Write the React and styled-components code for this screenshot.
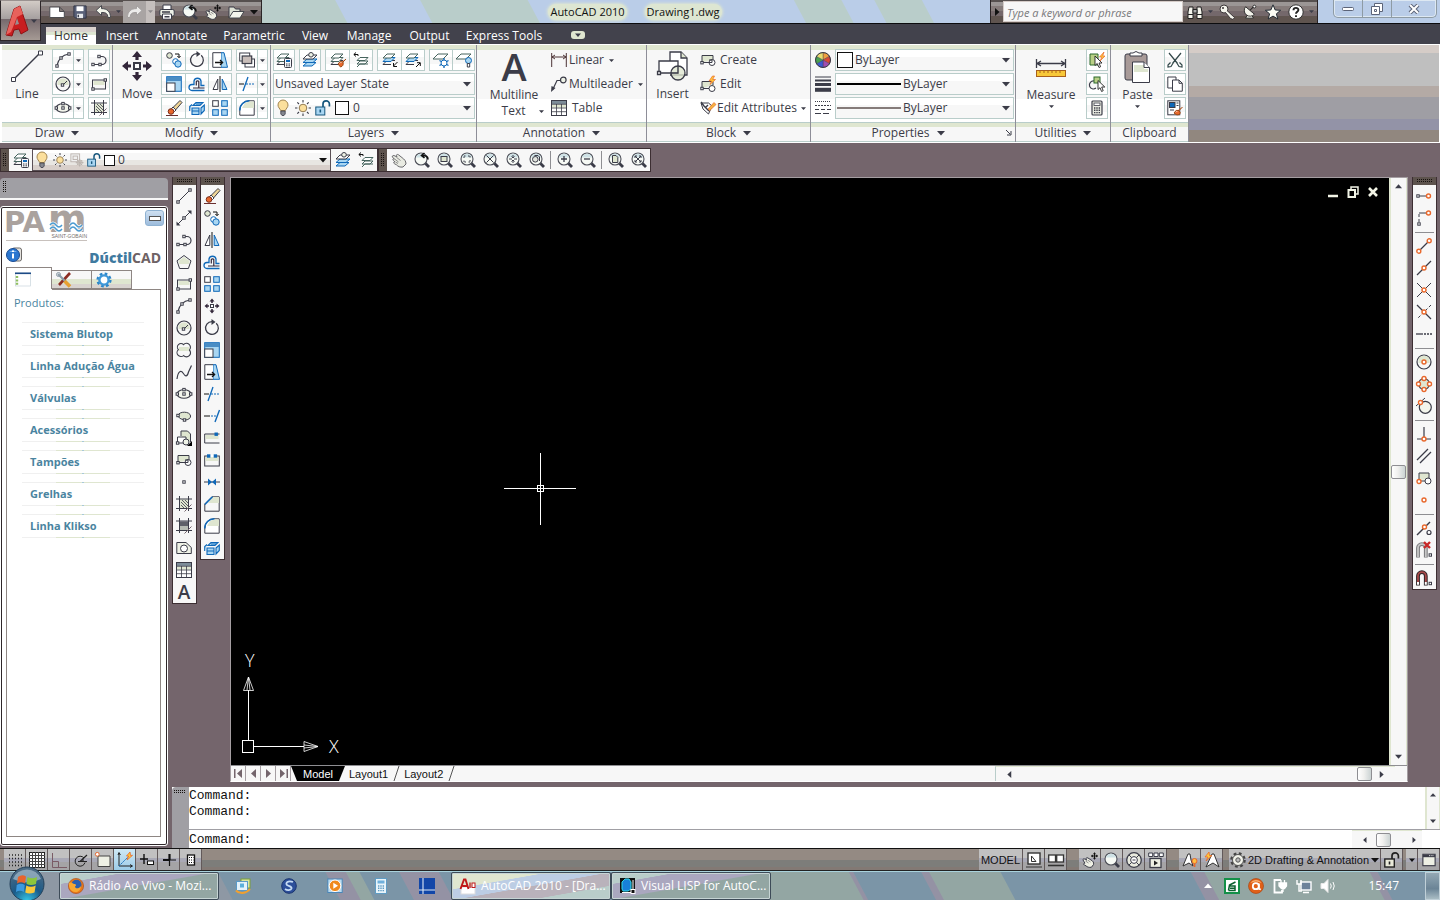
import styled, { createGlobalStyle, css } from 'styled-components';

const ink = '#3b3c48';
const blue = '#0f68b8';
const sky = '#a9d6f2';
const mint = '#dfe6d0';
const orange = '#e8682c';
const ui = '"Open Sans", "Noto Sans", sans-serif';

const GlobalStyle = createGlobalStyle`
	*, *::before, *::after { box-sizing: border-box; }
	html, body, #root { height: 100%; }
	body {
		margin: 0;
		background: #74656c;
		color: ${ink};
		font: 11px/16px ${ui};
		overflow: hidden;
	}
	button, select, input {
		font: inherit;
		color: inherit;
		margin: 0;
		padding: 0;
		border: 0;
		background: none;
	}
	svg { display: block; flex: none; }
	ul { list-style: none; margin: 0; padding: 0; }
`;

/* ---------- drawings, on a 16 unit grid ---------- */

const Sq = ({ x, y, s = 2.4 }) => <rect x={x - s / 2} y={y - s / 2} width={s} height={s} fill="#fff" />;
const Snap = ({ x, y }) => <circle cx={x} cy={y} r="2" stroke={orange} strokeWidth="1.4" fill="#fff" />;
const Lens = ({ children }) => (
	<>
		<path d="M11 11 L15 15" strokeWidth="2.8" />
		<circle cx="7" cy="7" r="6" fill="#f7faf5" stroke="#4d4f58" strokeWidth="1.1" />
		<path d="M2 5.5 A5.2 5.2 0 0 1 12 5.5Z" fill="#cfe2e6" stroke="none" />
		{children}
	</>
);
const Sheets = ({ top = '#fff' }) => (
	<>
		<path d="M1 12.5 L5 8.5 H13" />
		<path d="M1 12.5 H9" />
		<path d="M1 9.5 L5 5.5 H13 L9 9.5Z" fill={top} stroke={top === '#fff' ? '#46645e' : blue} />
		<path d="M1 6 L5 2 H13 L9 6Z" fill="#fff" stroke="#46645e" />
	</>
);
const HatchBase = () => <path d="M3.5 0 V15 M12.5 0 V15 M0 3 H16 M0 12.5 H16" />;

const glyphs = {
	line: <><path d="M2.5 13.5 L13.5 2.5" /><Sq x={2} y={14} /><Sq x={14} y={2} /></>,
	xline: <><path d="M2 14 L14 2" /><path d="M0.5 15.5 V11.5 L4.5 15.5Z M15.5 .5 V4.5 L11.5 .5Z" fill={ink} stroke="none" /><Sq x={8} y={8} /></>,
	polyline: <><path d="M1.5 12.5 H9 M9 12.5 H11 A3.7 3.7 0 0 0 11 4.5 H8" strokeWidth="1.2" /><Sq x={2} y={12.5} /><Sq x={9} y={12.5} /><Sq x={8} y={4.5} /></>,
	polygon: <><path d="M8 1.5 L15 6.8 L12.4 14.5 H3.6 L1 6.8Z" fill="#f7f7f7" /><path d="M8 3 L13.5 7 L13 10 H3 L2.5 7Z" fill={mint} stroke="none" /></>,
	rect: <><rect x="1.5" y="4" width="13" height="9" fill="#f7f7f7" /><rect x="2.5" y="5" width="11" height="4" fill={mint} stroke="none" /><Sq x={2} y={13} /><Sq x={14.3} y={4} /></>,
	arc: <><path d="M1.8 14 C3 8 7 3 14 2" strokeWidth="1.2" /><Sq x={2} y={14} /><Sq x={6} y={6} /><Sq x={14} y={2} /></>,
	circle: <><circle cx="8" cy="8" r="7" fill="#f7f7f7" strokeWidth="1.2" /><path d="M2.5 6 A6 6 0 0 1 13.5 6 V9 H2.5Z" fill={mint} stroke="none" /><path d="M8 9 L12 5" /><Sq x={7.5} y={9} /></>,
	cloud: <><path d="M7.5 2.6 A3.4 3.4 0 1 0 2.4 7.6 A3.6 3.6 0 1 0 7.6 13.6 A3.7 3.7 0 1 0 13.4 8 A3.5 3.5 0 1 0 7.5 2.6Z" fill="#f7f7f7" strokeWidth="1.1" /><path d="M3 5 H13 V9 H3Z" fill={mint} stroke="none" /></>,
	spline: <path d="M1 15 C2 7 5 6 7 9 S11 14 12.5 8 L15.5 1.5" strokeWidth="1.2" />,
	ellipse: <><ellipse cx="8" cy="8" rx="7" ry="4.3" fill="#f3f5ec" strokeWidth="1.1" /><Sq x={1.3} y={8} /><Sq x={8} y={3.6} /><Sq x={8} y={8} /><Sq x={14.7} y={8} /></>,
	ellArc: <><path d="M2 7.5 C3 3 14 3 14.6 8 C14.6 10.5 12 12 9 12 M2 7.5 C2 9 4 11 7 11.5" fill={mint} /><Sq x={2} y={7.5} /><Sq x={8.5} y={12} /></>,
	block: <><path d="M5 6 V1 H11.5 L14.5 4 V12" fill={mint} /><path d="M1.5 13 V7 H10 V13Z" fill="#fff" /><circle cx="10" cy="12" r="3" fill="#eef2e6" /><Sq x={1.6} y={13} /><path d="M16 11 V16 H11Z" fill="#000" stroke="none" /></>,
	makeBlock: <><path d="M2 10.5 V3.5 H13 V8 M2 10.5 H9" fill={mint} /><circle cx="12" cy="10.5" r="3" fill="#fff" /><path d="M9 8 H12 V10.5 H9" /><Sq x={2} y={10.7} /></>,
	editBlock: <><path d="M2 12.5 V5.5 H13 V9 M2 12.5 H9" fill={mint} /><circle cx="12" cy="12.5" r="3" fill="#fff" /><Sq x={2} y={12.5} /><path d="M12.5 0 L9 5 H11.5 L10 8.5 L15.5 3.5 H12.7 L14.5 0Z" fill="#ffc83a" stroke={orange} strokeWidth=".7" /></>,
	editAttr: <><path d="M1 3 L8.5 3 L12 6 L8.5 14 L3 9Z" fill="#fff" /><path d="M1 2 L4 6 L9 11 M5 8 L8 5" strokeWidth="1.4" /><path d="M8 9 L14 2.5 L16 4.5 L9.8 10.5Z" fill="#f5b440" stroke={orange} strokeWidth=".7" /></>,
	point: <Sq x={8} y={8} />,
	hatch: <><rect x="4" y="3.5" width="8" height="9" fill={mint} stroke="none" /><path d="M5 9 L8 12 M5 6 L11 12 M6 4 L12 10 M9 4 L12 7" strokeWidth=".8" /><HatchBase /><path d="M8.5 15.5 L15.5 8.5" stroke="#74656c" /></>,
	gradient: <><rect x="4" y="3.5" width="8" height="5" fill="#5e6068" stroke="none" /><rect x="4" y="8" width="8" height="5" fill="#b6bbb2" stroke="none" /><HatchBase /><path d="M8.5 15.5 L15.5 8.5" stroke="#74656c" /></>,
	region: <><path d="M.8 13.5 V2.5 H10 L15.3 7.5 V13.5Z" fill="#eff2e6" /><circle cx="8" cy="8.5" r="3.5" fill="#fff" /></>,
	table: <><rect x=".5" y=".5" width="15" height="15" fill="#fff" /><rect x="1" y="1" width="14" height="3" fill="#7d8c98" stroke="none" /><rect x="1" y="4.5" width="14" height="3" fill={mint} stroke="none" /><path d="M.5 4.3 H15.5 M.5 8 H15.5 M.5 11.7 H15.5 M5.5 4 V15 M10.5 4 V15" strokeWidth=".8" /></>,
	erase: <><path d="M0 15.5 H12" stroke="#6b3030" /><path d="M7 7.5 L14 .5 L16 2.5 L9.5 10Z" fill="#efd495" /><path d="M5.5 8.5 L7 7 L10 10 L8.5 11.5Z" fill="#fff" /><circle cx="5" cy="11.5" r="2.8" fill={orange} stroke="#7a2c18" /></>,
	copy: <><circle cx="3.5" cy="3.5" r="2.8" fill={mint} /><circle cx="9.5" cy="9.5" r="2.8" fill="#fff" stroke={blue} /><circle cx="12" cy="12" r="3.2" fill={sky} stroke={blue} /><path d="M9 2 H13 V5 M11.4 4 L13 5.8 L14.6 4" stroke="#111" /></>,
	mirror: <><path d="M1 13.5 L5.8 3 V13.5Z" fill="#fff" /><path d="M15 13.5 L10.2 3 V13.5Z" fill={sky} stroke={blue} /><path d="M8 0 V16" stroke="#111" /></>,
	offset: <><path d="M15.5 14.5 H3 A2.4 2.4 0 0 1 3 8.5 H5 V5 A3.6 3.6 0 0 1 12 5 V9.5 H15.5" fill="#f7fafc" stroke={blue} strokeWidth="1.3" /><path d="M15.5 12 H4 M7.3 9.5 V5.5 A1.5 1.5 0 0 1 9.8 5.5 V12" stroke="#33273a" strokeWidth="1.2" /></>,
	array: <><rect x=".7" y=".7" width="5.6" height="5.6" fill="#fff" /><g fill={sky} stroke={blue}><rect x="9.7" y=".7" width="5.6" height="5.6" /><rect x=".7" y="9.7" width="5.6" height="5.6" /><rect x="9.7" y="9.7" width="5.6" height="5.6" /></g></>,
	move: <><path d="M8 .5 L10.5 3.5 H5.5Z M8 15.5 L10.5 12.5 H5.5Z M.5 8 L3.5 5.5 V10.5Z M15.5 8 L12.5 5.5 V10.5Z" fill="#33273a" stroke="none" /><path d="M8 3 V5 M8 11 V13 M3 8 H5 M11 8 H13" stroke="#33273a" strokeWidth="1.6" /><Sq x={8} y={8} s={3} /></>,
	rotate: <><path d="M8 1.6 A6.4 6.4 0 1 0 12.2 3.2" strokeWidth="1.3" /><path d="M7.5 -1 V5 L11.5 2Z" fill={ink} stroke="none" /></>,
	scale: <><rect x=".7" y=".7" width="14.6" height="14.6" fill={sky} stroke={blue} /><rect x="1" y="1" width="14" height="4" fill="#4a8dc4" stroke="none" /><rect x=".7" y="7" width="8.3" height="8.3" fill="#fff" /></>,
	stretch: <><path d="M9 .7 H12 L15.5 15.3 H9Z" fill={sky} stroke={blue} /><path d="M9 .7 H.8 V15.3 H9" fill="#fff" /><path d="M3 10.5 H10 M8 8 L10.6 10.5 L8 13" stroke="#111" strokeWidth="1.3" /></>,
	trim: <><path d="M0 8 H5" stroke="#111" /><path d="M7 8 H16" stroke={blue} strokeDasharray="2 1" /><path d="M4 15 L9 1" stroke={blue} strokeWidth="1.3" /></>,
	extend: <><path d="M0 8 H6" stroke="#111" /><path d="M7 8 H12" stroke={blue} strokeDasharray="2 1" /><path d="M11 14 L15.5 2" stroke={blue} strokeWidth="1.4" /></>,
	breakPt: <><path d="M.7 13 V4 H15.5" /><rect x="1.5" y="5" width="13" height="4" fill={mint} stroke="none" /><path d="M.7 13 H15.5" /><rect x="10.5" y="2.5" width="3.4" height="3.4" fill={blue} stroke="none" /></>,
	breakObj: <><rect x=".7" y="4" width="14.6" height="10" fill="#f7f7f7" /><rect x="1.5" y="5" width="13" height="4" fill={mint} stroke="none" /><path d="M5 4 H11" stroke="#fff" strokeWidth="2" /><rect x="3" y="2.3" width="3.4" height="3.4" fill={blue} stroke="none" /><rect x="9.7" y="2.3" width="3.4" height="3.4" fill={blue} stroke="none" /></>,
	join: <><path d="M0 8 H16" /><path d="M4 4.5 L8 8 L4 11.5Z M12 4.5 L8 8 L12 11.5Z" fill={blue} stroke="none" /></>,
	chamfer: <><path d="M.8 15.2 V8 L8 .8 H15.2 V15.2Z" fill="#f7f7f7" /><path d="M8 1 L15 1 V7 H4Z" fill={mint} stroke="none" /><path d="M.8 8.5 L8.5 .8" stroke={blue} strokeWidth="1.6" /></>,
	fillet: <><path d="M.8 15.2 V10 A9 9 0 0 1 10 .8 H15.2 V15.2Z" fill="#fff" /><path d="M6 3 L10 1.5 H15 V8 H3Z" fill={mint} stroke="none" /><path d="M.8 10.5 A9.4 9.4 0 0 1 10.5 .8" stroke={blue} strokeWidth="1.5" /></>,
	explode: <><path d="M3 8 H10 V14.5 H3Z M4 5.5 L7 2.5 H14 L11 5.5Z M12 8 L15.3 5 V10.5 L12 14Z M.7 11 V6.5 L3 4.5" fill={sky} stroke={blue} strokeWidth="1.1" /><path d="M3 11 H10 M7 4 H12" stroke={blue} /></>,
	order: <><rect x=".7" y="1" width="10" height="8" fill="#fff" /><rect x="6" y="7" width="9.5" height="8" fill="#fff" /><rect x="3.2" y="4" width="9.5" height="7.5" fill="#c8bdb9" strokeWidth="1.2" /></>,
	layerProps: <><Sheets /><rect x="8.5" y="6.5" width="7" height="9" rx="1" fill="#f5f7fa" /><rect x="10" y="8" width="4" height="2" fill={blue} stroke="none" /><path d="M10 12 H14 M10 13.8 H14" strokeDasharray="1 .5" /></>,
	layerCur: <><path d="M1 14 L5 10.5 H14 L10 14Z" fill={sky} stroke={blue} /><path d="M1 10.5 L5 7 H15 L11 10.5Z" fill={sky} stroke={blue} /><path d="M1 7 L5 3 H15 L11 7Z" fill="#fff" /><circle cx="9" cy="2.8" r="2.3" fill="#eef2e6" /></>,
	layerMatch: <><Sheets /><path d="M8 12 Q10 8 13 10 L16 7 M8 12 L10.5 15 Q14 14 13 10" fill={orange} stroke="#9c4a16" /></>,
	layerPrev: <><path d="M4 15 L7 12 H15 M4 12 L7 9 H15 L12 12Z M4 8.5 L7 5.5 H15 L12 8.5Z" fill="#fff" stroke="#46645e" /><path d="M1 2.5 H5 V4 M3 .5 L.8 2.5 L3 4.5" stroke="#111" /></>,
	layerIso: <><Sheets top={sky} /><path d="M15.5 10 L11.5 14 M11.5 11 V14.5 H15" stroke="#111" /></>,
	layerUniso: <><Sheets top={sky} /><path d="M11 15 L15 11 M12 10.7 H15.3 V14" stroke="#111" /></>,
	layerFreeze: <><path d="M0 7 L5 2 H15 L10 7Z" fill="#fff" stroke="#46645e" /><path d="M11 6 V16 M6.5 8.5 L15.5 13.5 M15.5 8.5 L6.5 13.5" stroke={blue} strokeWidth="1.3" /><circle cx="11" cy="11" r="3" stroke={blue} fill="#fff" /></>,
	layerOff: <><path d="M0 7 L5 2 H15 L10 7Z" fill="#fff" stroke="#46645e" /><circle cx="12.5" cy="8.5" r="3" fill={sky} stroke={blue} /><path d="M11.3 11.5 H13.7 V15 H11.3Z" fill="#fff" /></>,
	bulb: <><path d="M5.6 10.5 C5 8.5 3 7.5 3 5 A5 5 0 0 1 13 5 C13 7.5 11 8.5 10.4 10.5Z" fill="#fbdf9c" stroke="#a28550" /><path d="M5.8 11 H10.2 V14 L9 15.5 H7 L5.8 14Z" fill="#85878f" stroke={ink} strokeWidth=".8" /></>,
	sun: <><circle cx="8" cy="8" r="3.8" fill="#fbdf9c" stroke="#927a50" /><path d="M8 0 V2.4 M8 13.6 V16 M0 8 H2.4 M13.6 8 H16 M2.3 2.3 L4 4 M12 12 L13.7 13.7 M13.7 2.3 L12 4 M4 12 L2.3 13.7" strokeWidth="1.1" /></>,
	vpFreeze: <g stroke="#b9b1ac"><rect x="1" y="1" width="10" height="9" fill="#f0f0f0" /><rect x="3.5" y="3.5" width="5" height="4" /><circle cx="11" cy="11" r="3" fill="#e4e0dc" /><path d="M11 6.5 V15.5 M6.5 11 H15.5 M8 8 L14 14 M14 8 L8 14" /></g>,
	unlock: <><rect x=".8" y="7" width="9" height="8" fill={sky} stroke="#16567c" /><path d="M8 7 V4 A3.2 3.2 0 0 1 14.4 4 V6.5" stroke="#16567c" strokeWidth="1.7" /><path d="M5.3 9.5 V12.5" stroke="#16567c" strokeWidth="1.6" /></>,
	lock: <><rect x=".8" y="7" width="9.5" height="8" fill="#e9ead9" stroke="#222" strokeWidth="1.4" /><path d="M8 7 V4 A3.2 3.2 0 0 1 14.4 4 V6.5" stroke="#222" strokeWidth="1.7" /><path d="M5.5 9.5 V12.5" stroke="#222" strokeWidth="1.6" /></>,
	linear: <><path d="M.7 1 V15 M15.3 1 V15 M1 5 H15 M4 3 L1 5 L4 7 M12 3 L15 5 L12 7" stroke="#4c3335" /></>,
	mleader: <><path d="M1.5 14 L6 4.5 H9.5" strokeWidth="1.2" /><path d="M0 16 L.5 10 L4.5 12Z" fill={ink} stroke="none" /><circle cx="12.3" cy="4" r="2.8" fill="#eef2e6" strokeWidth="1.2" /></>,
	pan: <><path d="M1.2 5 C1 3.6 2.6 3 4 4 L6 5 C4.6 3 6 1.8 7.5 2.8 L11 5.6 C13.5 7.5 15 9 15 12 L12 15 C9 15.5 7 14.5 5.5 12.8 L3.6 11.8 C2 11 2.6 9.8 4 9.9 L2.5 8.6 C1.2 7.4 2 6.3 3.5 7Z" fill="#e9ebe2" stroke="#6a6a6e" /><path d="M4 7.3 L7.5 10 M5.5 5.3 L9.5 8.5 M4.5 10 L7 11.5" stroke="#8c8c8c" /></>,
	panMove: <><path d="M1 8 C.8 6.8 2 6.5 3.5 7.5 L5 8.2 C3 6.5 4.5 5 6 6 L9 8 C11 9 12 10.5 11.5 12.5 L9.5 15.2 C7 15.7 5 15 4 13.8 L2.3 13 C1 12 1.8 11 3 11.2Z" fill="#f0f1e6" stroke={ink} /><path d="M3.5 9 L6.5 11 M6 8.3 L8.5 10" stroke="#8c8c8c" /><path d="M12.5 .5 V7.5 M9 4 H16 M11.3 1.8 H13.7 M11.3 6.2 H13.7 M10.3 2.8 V5.2 M14.7 2.8 V5.2" stroke="#111" /></>,
	zoomPrev: <Lens><path d="M14 7.5 C14 4 12 3.5 8 3.5 M10.5 1 L7.5 3.5 L10.5 6" stroke="#111" strokeWidth="1.6" fill="none" /></Lens>,
	zoomWin: <Lens><rect x="4" y="4.5" width="6" height="5" fill={mint} /></Lens>,
	zoomDyn: <Lens><path d="M4 6 V4 H6 M8 4 H10 V6 M10 8 V10 H8 M6 10 H4 V8" strokeDasharray="1.5 .5" /></Lens>,
	zoomScale: <Lens><path d="M3.5 3.5 L10.5 10.5 M10.5 3.5 L3.5 10.5" /></Lens>,
	zoomCenter: <Lens><path d="M7 3 V6 M7 8 V11 M3 7 H6 M8 7 H11 M5.5 4.5 L7 6 L8.5 4.5 M5.5 9.5 L7 8 L8.5 9.5" /></Lens>,
	zoomObj: <Lens><circle cx="6.3" cy="7.3" r="2.8" fill="#e3e6df" /><path d="M5.5 3.5 H9 L10.5 5 V9" /></Lens>,
	zoomIn: <Lens><path d="M7 4 V10 M4 7 H10" strokeWidth="1.3" /></Lens>,
	zoomOut: <Lens><path d="M4 7 H10" strokeWidth="1.3" /></Lens>,
	zoomAll: <Lens><path d="M4.5 3.5 H8 L9.8 5.3 V10.5 H4.5Z" fill={mint} /></Lens>,
	zoomExt: <Lens><path d="M4 4 L10 10 M10 4 L4 10 M4 6 V4 H6 M8 4 H10 V6 M10 8 V10 H8 M6 10 H4 V8" /></Lens>,
	zoomPlain: <Lens />,
	newDoc: <path d="M.8 13.5 V3 H10.5 L15.3 7.5 V13.5Z M10.5 3 V7.5 H15.3" fill="#fff" stroke="#4c4c50" />,
	save: <><path d="M1 1 H15 V15 H3 L1 13Z" fill="#596078" stroke="#2d3040" /><rect x="4" y="1.5" width="8" height="5.5" fill="#fff" stroke="none" /><rect x="4.5" y="10" width="7" height="5" fill="#e7e9ec" stroke="none" /><path d="M6 11 V14" stroke="#2d3040" strokeWidth="1.5" /></>,
	undo: <path d="M6.5 1.5 L1 6.5 L6.5 11.5 V8.5 C11 8.3 12.5 9.5 13 13.5 H15.5 C15.5 7.5 12 4.5 6.5 4.6Z" fill="#f2f4ea" stroke="#46484e" />,
	redo: <path d="M9.5 1.5 L15 6.5 L9.5 11.5 V8.5 C5 8.3 3.5 9.5 3 13.5 H.5 C.5 7.5 4 4.5 9.5 4.6Z" fill="#ecebea" stroke="#a39f9f" />,
	print: <><path d="M4 6 V1 H12 V6" fill="#fff" /><rect x=".8" y="5.5" width="14.4" height="6.5" rx="1.5" fill="#ecefe6" /><path d="M3.5 10 H12.5 V15.2 H3.5Z" fill="#fff" /><path d="M3 8 H11 M5.5 12.7 H10.5" strokeWidth="1.4" /></>,
	open: <><path d="M1 14 V3 H6 L7.5 5 H12 V7.5" fill="#dfe3d6" /><path d="M1 14 L5 7.5 H16 L12 14Z" fill="#f4f5ec" stroke="#46484e" /></>,
	binoc: <><path d="M2 3 H6 V14.5 H1 V8Z M10 3 H14 L15 8 V14.5 H10Z" fill="#f4f4ec" stroke="#222" /><path d="M6 5.5 H10 V9 H6Z" fill="#aaa" stroke="#222" /><path d="M1 10.5 H6 M10 10.5 H15" stroke="#222" /></>,
	key: <><circle cx="5" cy="5" r="4" fill="#f4f4ec" stroke="#3b3638" /><path d="M8 6.5 L15.5 13.5 L14 15.5 L11.5 14.5 L6.3 8.3" fill="#f4f4ec" stroke="#3b3638" /><circle cx="4" cy="4" r="1" fill="#3b3638" stroke="none" /></>,
	dish: <><path d="M6 10 L3 15 H12 L9.5 11" fill="#f4f4ec" stroke="#222" /><path d="M3 2 A6.5 6.5 0 0 0 13 10.5Z" fill="#f4f4ec" stroke="#222" /><path d="M8 6 L12.5 1.5" stroke="#222" strokeWidth="1.2" /><circle cx="13" cy="1.8" r="1.6" fill="#fff" stroke="#222" /></>,
	star: <path d="M8 .8 L10.2 6 L15.6 6.3 L11.4 9.8 L12.8 15 L8 12.1 L3.2 15 L4.6 9.8 L.4 6.3 L5.8 6Z" fill="#fcfcf4" stroke="#222a33" />,
	help: <><circle cx="8" cy="8" r="7.2" fill="#fff" stroke="#333" /><path d="M5.5 6.2 C5.5 3 10.6 3.2 10.4 6 C10.3 7.7 8 7.9 8 9.8 M8 11.3 V13" stroke="#222" strokeWidth="1.9" /></>,
	selCycle: <><path d="M1 2 H9 V13 H1Z" fill="#b9cf85" stroke="#2d6a2d" /><path d="M15 0 L10.5 5 H13 L11 9 L16 4 H13.7Z" fill="#ffc83a" stroke={orange} strokeWidth=".7" /><path d="M6 4 V13.5 L8.2 11.5 L10 15.5 L11.6 14.7 L10 11 H13Z" fill="#fff" stroke="#222" strokeWidth=".9" /></>,
	selSimilar: <><path d="M5 5 A4 4 0 1 0 7 12" strokeWidth="1.2" /><rect x="5" y="1" width="6" height="6" fill="#b9cf85" stroke="#2d6a2d" /><path d="M9 4.5 V13.5 L11 11.7 L12.6 15.5 L14.2 14.7 L12.7 11 H15.8Z" fill="#fff" stroke="#222" strokeWidth=".9" /></>,
	calc: <><rect x="3" y="1" width="10" height="14" rx="1" fill="#e9ebe2" strokeWidth="1.2" /><rect x="5" y="3" width="6" height="2.5" fill="#fff" strokeWidth=".8" /><path d="M5 8 H11 M5 10.3 H11 M5 12.6 H11" strokeWidth="1.4" strokeDasharray="1.4 .9" /></>,
	cut: <path d="M2 1 L10.5 11.5 M14 1 L5.5 11.5 M3.5 10.5 L1 13 V15 L4 14.5 L8 8 M12.5 10.5 L15 13 V15 L12 14.5 L8 8" stroke="#33484a" strokeWidth="1.2" />,
	copyClip: <><path d="M.8 12 V1 H9 V12Z" fill="#fff" /><path d="M5.5 15.2 V4 H12 L15.3 7.3 V15.2Z M12 4 V7.3 H15.3" fill="#fff" /></>,
	matchProp: <><rect x=".8" y=".8" width="12" height="14" fill="#fff" /><rect x="2.5" y="2.5" width="5.5" height="5" fill={blue} stroke={ink} /><path d="M9.5 3 H11.5 M9.5 5.5 H11.5 M3 10 H7" /><path d="M7 13 Q9 9 12 10.5 L15.5 7 M7 13 Q10 16 12.5 14.5 Q14 12.5 12 10.5" fill={orange} stroke="#9c4a16" /></>,
	wheelCol: <g strokeWidth=".4"><path d="M8 8 V.5 A7.5 7.5 0 0 1 14.5 4.2Z" fill="#f0a040" /><path d="M8 8 L14.5 4.2 A7.5 7.5 0 0 1 14.5 11.8Z" fill="#d84838" /><path d="M8 8 L14.5 11.8 A7.5 7.5 0 0 1 8 15.5Z" fill="#a04cb0" /><path d="M8 8 V15.5 A7.5 7.5 0 0 1 1.5 11.8Z" fill="#3e58d0" /><path d="M8 8 L1.5 11.8 A7.5 7.5 0 0 1 1.5 4.2Z" fill="#48a050" /><path d="M8 8 L1.5 4.2 A7.5 7.5 0 0 1 8 .5Z" fill="#e8dc70" /><circle cx="8" cy="8" r="7.5" strokeWidth="1" /></g>,
	weights: <><path d="M0 1 H16" /><path d="M0 4.5 H16" strokeWidth="2" /><path d="M0 8.5 H16" strokeWidth="3" /><path d="M0 13.8 H16" strokeWidth="4" /></>,
	ltypes: <><path d="M0 1.5 H16" strokeDasharray="1 1" /><path d="M0 5.5 H16" strokeDasharray="2 1" /><path d="M0 9.5 H16" strokeDasharray="4 2" /><path d="M0 13.5 H16" strokeDasharray="6 2" /></>,
	snapTrack: <><path d="M2 8 H11" /><Sq x={2} y={8} /><Snap x={12.5} y={8} /></>,
	snapFrom: <><path d="M3 3 H11" /><path d="M3 4 V13" strokeDasharray="3 2" /><Sq x={3} y={14} /><Snap x={12.5} y={3} /></>,
	snapEnd: <><path d="M3 13 L13 3" strokeWidth="1.3" /><Snap x={2.8} y={13.2} /><Snap x={13.2} y={2.8} /></>,
	snapMid: <><path d="M1 15 L15 1" strokeWidth="1.3" /><Snap x={8} y={8} /></>,
	snapInt: <><path d="M1 1 L15 15 M15 1 L1 15" /><Snap x={8} y={8} /></>,
	snapApp: <><path d="M1 1 L15 15" strokeWidth="1.2" /><path d="M15 1 L1 15" strokeDasharray="3 2" /><Snap x={8} y={8} /></>,
	snapExt: <><path d="M0 8 H7" strokeWidth="1.3" /><path d="M8 8 H16" strokeWidth="1.3" strokeDasharray="2 1" /></>,
	snapCen: <><circle cx="8" cy="8" r="7" fill="#f7f7f7" strokeWidth="1.2" /><path d="M2.5 5 A6.3 6.3 0 0 1 13.5 5 V9 H2.5Z" fill={mint} stroke="none" /><Snap x={8} y={8} /></>,
	snapQua: <><circle cx="8" cy="8" r="5.4" fill={mint} strokeWidth="1.2" /><Snap x={8} y={2.5} /><Snap x={2.5} y={8} /><Snap x={13.5} y={8} /><Snap x={8} y={13.5} /></>,
	snapTan: <><circle cx="9.3" cy="9.3" r="6" fill="#f3f5ec" strokeWidth="1.2" /><path d="M0 8 L9 0" /><Snap x={4.5} y={4.5} /></>,
	snapPer: <><path d="M8 1 V13 M1 13 H15" strokeWidth="1.2" /><Snap x={8} y={13} /></>,
	snapPar: <path d="M1 12 L12 1 M4 15 L15 4" strokeWidth="1.3" />,
	snapIns: <><path d="M3 10 V3 H13 V9 M5 11 H9" fill={mint} /><circle cx="12" cy="11" r="3" fill="#fff" /><Snap x={3} y={11.5} /></>,
	snapNode: <Snap x={8} y={8} />,
	snapNear: <><path d="M1 15 L14 2" strokeWidth="1.4" /><Snap x={8.5} y={7} /><circle cx="13" cy="12.5" r="2" fill="#fff" strokeWidth="1.2" /></>,
	snapNone: <><path d="M2 15.5 V6 A3.9 3.9 0 0 1 9.8 6 V15.5" stroke="#77777a" strokeWidth="3.8" /><path d="M2 15 V6 A3.9 3.9 0 0 1 9.8 6 V15" stroke="#c8c8c8" strokeWidth="1.8" /><path d="M8 0 L14 6 M14 0 L8 6" stroke="#c82828" strokeWidth="2.4" /><Sq x={14.3} y={13} /></>,
	snapSet: <><path d="M2 15.5 V6 A3.9 3.9 0 0 1 9.8 6 V15.5" stroke="#2c2426" strokeWidth="3.8" /><path d="M2 12 V6 A3.9 3.9 0 0 1 9.8 6 V12" stroke="#a84848" strokeWidth="1.8" /><path d="M2 12 V14.8 M9.8 12 V14.8" stroke="#fff" strokeWidth="2" /><Sq x={14.3} y={13.5} /></>,
	gridDots: <path d="M2 3 H15 M2 6.5 H15 M2 10 H15 M2 13.5 H15" stroke="#222" strokeDasharray="1 2" strokeWidth="1.3" />,
	grid: <><rect x=".5" y=".5" width="15" height="15" fill="#fff" stroke="#222" /><path d="M3.5 0 V16 M6.5 0 V16 M9.5 0 V16 M12.5 0 V16 M0 3.5 H16 M0 6.5 H16 M0 9.5 H16 M0 12.5 H16" stroke="#444" /></>,
	ortho: <path d="M1.5 1 V15.5 H16 M1.5 9.5 H7.5 V15.5" stroke="#7a5c66" />,
	polar: <><path d="M11 6 A5 5 0 1 0 12 10.5" stroke="#222" /><path d="M7 9.5 L14 3 M5 9.5 H14 M10 6 V9.5" stroke="#222" strokeWidth="1.2" /></>,
	osnap: <><path d="M3 4 H15 V14.5 H3Z" fill="#eef0e4" stroke="#444" /><circle cx="2.3" cy="2.3" r="1.9" fill="#fff" stroke={orange} /></>,
	otrack: <><path d="M2 1 V14 H15 M1 3 L2 .5 L3.4 3 M13 12.6 L15.5 14 L13 15.4" stroke="#222" /><path d="M2 14 L12 4" stroke={blue} strokeDasharray="2 1" /><path d="M13 0 L9.5 4 H11.5 L10 8 L15.5 3.4 H13.5Z" fill="#ffc83a" stroke={orange} strokeWidth=".8" /></>,
	ducs: <><path d="M5 2 V12 M1 7 H9" stroke="#111" strokeWidth="1.4" /><rect x="8.5" y="9" width="6" height="3.5" fill="#fff" stroke="#111" /></>,
	dyn: <><path d="M8.5 2 V8 M2 8 H8" stroke="#111" strokeWidth="2.2" /><path d="M8.5 8 V14 M8 8 H15" stroke="#111" strokeWidth="1.2" /></>,
	qp: <><rect x="4.5" y="3" width="7" height="10" fill="#fff" stroke="#111" strokeWidth="1.3" /><path d="M6 5.5 H10.5 M6 8 H10.5 M6 10.5 H10.5" stroke="#111" strokeDasharray="1 1" /></>,
	layoutBtn: <><rect x="2" y="1" width="12" height="11" fill="#fff" stroke="#333" strokeWidth="1.4" /><path d="M5.5 4 V9.5 H10Z" stroke="#333" /><path d="M0 15 H16" stroke="#333" /></>,
	views: <><rect x=".7" y="3" width="6.8" height="7" fill="#fff" stroke="#333" strokeWidth="1.3" /><rect x="8.7" y="3" width="6.8" height="7" fill="#fff" stroke="#333" strokeWidth="1.3" /><path d="M0 13.5 H16" stroke="#333" strokeWidth="1.6" /></>,
	steer: <><circle cx="8" cy="8" r="7.3" fill="#e9ebdf" strokeWidth="1.3" /><circle cx="8" cy="8" r="3.4" fill="#fff" /><path d="M3 3 L5.5 5.5 M13 3 L10.5 5.5 M3 13 L5.5 10.5 M13 13 L10.5 10.5 M6.5 8 H9.5" /></>,
	motion: <><path d="M.7 1 H4.7 V4.5 H.7Z M6 1 H10 V4.5 H6Z M11.3 1 H15.3 V4.5 H11.3Z" fill="#fff" /><rect x="2" y="6.5" width="11" height="9" fill="#eef0e4" strokeWidth="1.3" /><path d="M6 8.5 L10 11 L6 13.5Z" fill="#222" stroke="none" /></>,
	annoVis: <><path d="M1 14 L6 2 H8 L9 8 L11 14 L7 11Z" fill="#fff" stroke="#333" /><circle cx="12.5" cy="9" r="2.5" fill="#ffc040" stroke={orange} /><path d="M12.5 11.5 V15" stroke={orange} strokeWidth="1.8" /></>,
	annoAuto: <><path d="M2 15 L8 2 H10 L15 15 L9 11Z" fill="#fff" stroke="#333" /><path d="M5 0 L1 5 H4 L2 9 L8 3.5 H5.5Z" fill="#ffc83a" stroke={orange} strokeWidth=".8" /></>,
	gear: <><circle cx="8" cy="8" r="6.3" stroke="#444" strokeWidth="3" strokeDasharray="2.6 2.35" /><circle cx="8" cy="8" r="5.5" fill="#f2f3ea" stroke="#555" /><circle cx="8" cy="8" r="2.2" fill="#bbb" stroke="#555" /></>,
	clean: <><rect x="1" y="1.5" width="14" height="13" fill="#eef0e4" strokeWidth="1.3" /><path d="M1 3.5 H15" strokeWidth="2.6" /><path d="M8 3 H14" stroke="#fff" strokeDasharray="1 1" /></>,
	info: <><rect x="6" y="1" width="9.5" height="13" rx="2" fill="#e5e3df" stroke="#6d6a68" /><circle cx="7" cy="8" r="6.5" fill="#2a76d0" stroke="#1a4c94" /><path d="M3 5 A5 4 0 0 1 11 5Z" fill="#7fb6ee" stroke="none" /><path d="M7 3.5 V5 M7 6.5 V11.5" stroke="#fff" strokeWidth="2" /></>,
	list: <><rect x=".5" y="2" width="15" height="13" fill="#fff" stroke="#c8d4dc" strokeWidth=".7" /><path d="M0 2.3 H16" stroke="#1c4a86" strokeWidth="1.6" /><path d="M2 5 V15" stroke="#8fbe60" strokeWidth="2.4" strokeDasharray="2 1.4" /></>,
	tools: <><path d="M14 1 L3 13" stroke="#8c2c22" strokeWidth="2.6" /><path d="M2 2 L14 14" stroke="#8a9aa6" strokeWidth="2.2" /><path d="M8.5 9 L14 14.5" stroke="#e8a030" strokeWidth="3.6" /><circle cx="2.5" cy="2.5" r="2" stroke="#8a9aa6" /></>,
	cog: <><circle cx="8" cy="8" r="6" stroke="#2b86c9" strokeWidth="3.2" strokeDasharray="2.5 2.2" /><circle cx="8" cy="8" r="4.6" fill="#fff" stroke="#3f97d8" strokeWidth="2.4" /></>,
	firefox: <><circle cx="8" cy="8" r="7.6" fill="#e8781c" stroke="#a84812" strokeWidth=".6" /><circle cx="8.5" cy="6.8" r="5" fill="#2c5fae" stroke="none" /><path d="M1 5 C3 4 4 5 6 6 C8 6 9 7 7 8.5 C7 11 11 11 13 8 C13 12 10 14.5 7 14 C3 13.5 .5 10 1 5Z" fill="#f8a832" stroke="none" /></>,
	photos: <><rect x="6" y="1" width="9" height="9" fill="#d8e6a0" stroke="#7ca03a" /><rect x="1.5" y="3.5" width="11" height="9" fill="#e4f2fa" stroke="#5a9ac8" /><rect x="5" y="5.5" width="4" height="4" fill="#5ab0dc" stroke="none" /><path d="M1 12.5 C4 16 11 16 15 11" stroke="#f0a030" strokeWidth="2" /></>,
	swirl: <><circle cx="8" cy="8" r="7.3" fill="#2c4f9a" stroke="#1a3470" /><path d="M12 4 C7 2 4 5 6 7 C8 8.5 11 8 10.5 10.5 C10 12.5 6 12.5 4 11" stroke="#c6dcf4" strokeWidth="1.8" /></>,
	player: <><rect x=".8" y="1" width="14.4" height="13.5" fill="#bcdcf0" stroke="#4a86b8" /><circle cx="8" cy="7.8" r="5.8" fill="#f08a1c" stroke="#fff" /><path d="M6.3 4.8 L11 7.8 L6.3 10.8Z" fill="#fff" stroke="none" /></>,
	calcBlue: <><rect x="2.5" y=".5" width="11" height="15" fill="#e8f4fa" stroke="#5f9cc4" /><rect x="4.5" y="2.5" width="7" height="3" fill="#6fb0dc" stroke="none" /><path d="M5 8 H11 M5 10.3 H11 M5 12.6 H11" stroke="#5f9cc4" strokeWidth="1.4" strokeDasharray="1.4 .9" /></>,
	flagBlue: <><rect x="0" y="0" width="16" height="16" fill="#1246a8" stroke="none" /><path d="M4 0 V16 M0 12 H16" stroke="#dce8f4" strokeWidth="1.1" /></>,
	vlisp: <><rect x="0" y="0" width="15" height="15" fill="#101010" stroke="none" /><path d="M2 4 L5 1 H9 L11 4 V11 L8 13 H3 L2 11Z" fill="#1880d8" stroke="#30d8e8" /><path d="M13 2 V15 M2 14.5 H12" stroke="#fff" /><rect x="11" y="11.5" width="4" height="4" fill="#111" stroke="#fff" /></>,
	cadDoc: <><rect x="1" y="9" width="14" height="7" fill="#fff" stroke="#ddd" /><path d="M.5 11 L4 1.5 H5.5 L8.5 11 M2.5 8 H7.5" stroke="#c01818" strokeWidth="1.9" /><path d="M10 4.5 V10" stroke="#c01818" strokeWidth="1.3" /><rect x="12" y="5" width="3" height="4.5" fill="#fff" stroke="#c01818" /></>,
	trayGreen: <><rect x="1" y="1" width="14" height="14" fill="#fff" stroke="#149048" strokeWidth="2" /><path d="M4.5 12.5 L5.5 7 L11.5 4 M5 8 H11 V12.5 H4.5 M6 10.3 H11" stroke="#0c6030" strokeWidth="1.5" /></>,
	avast: <><circle cx="8" cy="8" r="7.5" fill="#e06018" stroke="#a83c08" strokeWidth=".6" /><path d="M2.5 5 A6.5 6.5 0 0 1 13.5 5 Q8 2 2.5 5Z" fill="#f8b070" stroke="none" /><circle cx="7.8" cy="8.2" r="3" stroke="#fff" strokeWidth="1.8" /><path d="M11 5.5 V11 L12.8 11.5" stroke="#fff" strokeWidth="1.6" /></>,
	power: <><path d="M9 2 H2.5 V14.5 H10 V12" stroke="#fff" strokeWidth="1.8" /><path d="M7 5 H14.5 V8 L12.5 10.5 H9.5 L7 8Z M9 2 V5 M12.5 2 V5 M11 10 V14" fill="#fff" stroke="#fff" strokeWidth="1.3" /></>,
	network: <><rect x="5" y="4" width="10" height="8" fill="#6d829a" stroke="#fff" strokeWidth="1.4" /><path d="M7 14.5 H13 M1 2 V6 H5 V2 M3 6 V13 H6" stroke="#fff" strokeWidth="1.4" /></>,
	volume: <><path d="M1 5.5 H4 L8 1.5 V14.5 L4 10.5 H1Z" fill="#fff" stroke="#e8e8e8" /><path d="M10.5 5.5 Q12 8 10.5 10.5 M13 4 Q15.5 8 13 12" stroke="#fff" /></>,
	toolA: <text x="8" y="15" textAnchor="middle" fontFamily="Open Sans" fontSize="19" fontWeight="600" fill={ink} stroke="none">A</text>,
};

const Icon = ({ name, size = 16 }) => (
	<svg width={size} height={size} viewBox="0 0 16 16" fill="none" stroke={ink} overflow="visible" aria-hidden="true">
		{glyphs[name]}
	</svg>
);

const Caret = ({ dir = 'down', w = 7, color = ink }) => {
	const turn = { down: 0, up: 180, left: 90, right: 270 }[dir];
	return (
		<svg width={w} height={w} viewBox="0 0 8 8" aria-hidden="true">
			<path d="M0 2 H8 L4 6.5Z" fill={color} transform={`rotate(${turn} 4 4)`} />
		</svg>
	);
};

/* ---------- title bar and tabs ---------- */

const Window = styled.div`
	display: flex;
	flex-direction: column;
	height: 100vh;
	min-height: 700px;
`;

const Header = styled.header`
	display: grid;
	grid-template-columns: 41px 1fr;
	grid-template-rows: 24px 20px;
	background: #42424c;
`;

const AppButton = styled.button`
	grid-row: 1 / 3;
	height: 41px;
	border: 1px solid #2c2628;
	border-top-color: #9a9290;
	background: linear-gradient(#d2cbc6, #a6a0a0 45%, #75686c 46%, #a59a94);
	display: flex;
	align-items: center;
	justify-content: center;
	gap: 2px;
`;

const TitleRow = styled.div`
	display: flex;
	border-bottom: 1px solid #0c0c0e;
	background: linear-gradient(62deg, #b9cdca 0 270px, #bacde8 271px 345px, #b9cdca 346px 440px, #bacde8 441px 675px, #b9cdca 676px 717px, #bacde8 718px 746px, #b9cdca 747px 788px, #bacde8 789px);
`;

const metal = css`
	background: linear-gradient(#56504f 0 2px, #9b9695 2px 6px, #857b7a 6px 11px, #74686b 11px 16px, #5f544f 16px);
`;

const QuickBar = styled.div`
	${metal}
	display: flex;
	align-items: center;
	width: 221px;
	padding-left: 4px;
	border-right: 1px solid #2a2426;
`;

const Tool = styled.button`
	display: flex;
	align-items: center;
	justify-content: center;
	flex: none;
	width: ${(p) => p.$w || 23}px;
	height: ${(p) => p.$h || 22}px;
	background: ${(p) => p.$bg || 'none'};
`;

const Caption = styled.h1`
	flex: 1;
	display: flex;
	justify-content: center;
	align-items: center;
	gap: 18px;
	margin: 0;
	padding-left: 18px;
	font: 11px/16px ${ui};
	color: #111;

	span {
		padding: 0 2px;
		border-radius: 8px;
		background: #dde6d2;
		box-shadow: 0 0 3px 1px #dde6d2;
	}
`;

const InfoBar = styled.div`
	${metal}
	display: flex;
	align-items: center;
	width: 328px;
	border-left: 1px solid #2a2426;
	border-right: 1px solid #2a2426;

	input {
		width: 180px;
		height: 21px;
		padding-top: 2px;
		padding-left: 3px;
		background: #f7f7f7;
		border: 1px solid #d5ccc8;
		font-style: italic;
		font-size: 11px;
	}
	input::placeholder { color: #77777a; opacity: 1; }
`;

const WinButtons = styled.div`
	display: flex;
	align-self: flex-start;
	width: 104px;
	height: 18px;
	margin: 0 3px 0 15px;
	border: 1px solid #8e9ba4;
	border-top: 0;
	border-radius: 0 0 5px 5px;
	box-shadow: inset 0 0 0 1px #dde8f2;

	button {
		flex: 1;
		display: flex;
		justify-content: center;
		align-items: center;
	}
	button:last-child { flex: 1.6; }
	button + button { border-left: 1px solid #8e9ba4; }
`;

const TabRow = styled.nav`
	grid-column: 2;
	display: flex;
	align-items: flex-end;
	padding-left: 5px;
`;

const RibbonTab = styled.button`
	width: ${(p) => p.$w}px;
	height: 17px;
	font-size: 12px;
	line-height: 17px;
	white-space: nowrap;
	color: ${(p) => (p.$on ? '#333' : '#fff')};
	background: ${(p) => (p.$on ? 'linear-gradient(#d9d2ce 0 5px, #dde6d2 5px 8px, #fff 8px)' : 'none')};
`;

const TabToggle = styled.button`
	width: 14px;
	height: 8px;
	margin: 0 0 5px 21px;
	border-radius: 3px;
	background: #dfe6d0;
	display: flex;
	justify-content: center;
	align-items: center;
`;

const TitleBar = () => (
	<Header>
		<AppButton aria-label="Application menu">
			<svg width="24" height="32" viewBox="0 0 24 32" aria-hidden="true">
				<path d="M1 30 L9 4 L15 1 L23 25 L16 29 L14 24 L9 25 L7 31Z" fill="#c81e20" stroke="#8e1214" />
				<path d="M9 4 L15 1 L18 9 L12 12 L6 27 L1 30Z" fill="#e8625c" />
				<path d="M10 20 L12 13 L14 19Z" fill="#9a8e90" />
			</svg>
			<Caret w={6} />
		</AppButton>
		<TitleRow>
			<QuickBar>
				<Tool aria-label="New"><Icon name="newDoc" /></Tool>
				<Tool aria-label="Save"><Icon name="save" size={14} /></Tool>
				<Tool aria-label="Undo"><Icon name="undo" /></Tool>
				<Tool $w={9} aria-label="Undo list"><Caret w={5} /></Tool>
				<Tool $bg="#a9a4a3" aria-label="Redo"><Icon name="redo" /></Tool>
				<Tool $w={9} $bg="#c5bfbd" aria-label="Redo list"><Caret w={5} color="#8d8a8c" /></Tool>
				<Tool aria-label="Plot"><Icon name="print" /></Tool>
				<Tool aria-label="Zoom previous"><Icon name="zoomPrev" /></Tool>
				<Tool aria-label="Pan"><Icon name="panMove" /></Tool>
				<Tool aria-label="Open"><Icon name="open" /></Tool>
				<Tool $w={14} aria-label="Customize"><Caret w={8} color="#111" /></Tool>
			</QuickBar>
			<Caption><span>AutoCAD 2010</span><span>Drawing1.dwg</span></Caption>
			<InfoBar>
				<Tool $w={12} aria-label="Collapse search"><Caret dir="right" w={8} color="#111" /></Tool>
				<input type="text" aria-label="Search help" placeholder="Type a keyword or phrase" />
				<Tool aria-label="Search"><Icon name="binoc" /></Tool>
				<Tool $w={9} aria-label="Search options"><Caret w={5} /></Tool>
				<Tool aria-label="Subscription center"><Icon name="key" /></Tool>
				<Tool aria-label="Communication center"><Icon name="dish" size={14} /></Tool>
				<Tool aria-label="Favorites"><Icon name="star" /></Tool>
				<Tool aria-label="Help"><Icon name="help" /></Tool>
				<Tool $w={9} aria-label="Help options"><Caret w={5} /></Tool>
			</InfoBar>
			<WinButtons>
				<button aria-label="Minimize"><svg width="12" height="6"><rect x=".5" y="1.5" width="11" height="3" rx="1" fill="#fff" stroke="#5c6478" /></svg></button>
				<button aria-label="Restore"><svg width="12" height="12" fill="#fff" stroke="#5c6478"><path d="M3.5 .5 H11.5 V8.5 H3.5Z" /><path d="M.5 3.5 H8.5 V11.5 H.5Z" /><path d="M3.5 6.5 H5.5 V8.5 H3.5Z" /></svg></button>
				<button aria-label="Close"><svg width="12" height="10"><path d="M2 1 L10 9 M10 1 L2 9" stroke="#5c6478" strokeWidth="4" /><path d="M2 1 L10 9 M10 1 L2 9" stroke="#fff" strokeWidth="2" /></svg></button>
			</WinButtons>
		</TitleRow>
		<TabRow>
			{[['Home', 50], ['Insert', 52], ['Annotate', 67], ['Parametric', 78], ['View', 44], ['Manage', 64], ['Output', 57], ['Express Tools', 92]].map(([t, w], i) => (
				<RibbonTab key={t} $w={w} $on={i === 0}>{t}</RibbonTab>
			))}
			<TabToggle aria-label="Minimize ribbon"><Caret w={6} /></TabToggle>
		</TabRow>
	</Header>
);

/* ---------- ribbon ---------- */

const RibbonBar = styled.section`
	display: flex;
	height: 99px;
	padding: 1px 1px 1px 2px;
	background: #fff;
`;

const RibbonRest = styled.div`
	flex: 1;
	background: linear-gradient(#d5ccc7 0 8px, #bfbfbf 8px 41px, #b4aaa5 41px 52px, #9f9ea4 52px 74px, #9393a7 74px 85px, #91877f 85px);
`;

const PanelBox = styled.div`
	width: ${(p) => p.$w}px;
	flex: none;
	display: flex;
	flex-direction: column;
	border-right: 1px solid #8e8e98;
`;

const PanelBody = styled.div`
	display: flex;
	flex: 1;
	padding: ${(p) => p.$pad || '4px 2px 0 0'};
	background: linear-gradient(${mint} 0 5px, #f7f7f7 5px 54px, #fff 54px);
`;

const PanelTitle = styled.button`
	height: 20px;
	padding-top: 1px;
	display: flex;
	align-items: center;
	justify-content: center;
	gap: 7px;
	font-size: 12px;
	border-top: 1px solid #b9cdca;
	border-bottom: 1px solid #b9cdca;
	background: linear-gradient(${mint} 0 4px, #f7f7f7 4px);
`;

const Launcher = styled.svg`
	margin-left: auto;
	margin-right: 3px;
`;

const LaunchSpace = styled.i`
	margin-right: auto;
`;

const Panel = ({ title, w, pad, launch, plain, children }) => (
	<PanelBox $w={w}>
		<PanelBody $pad={pad}>{children}</PanelBody>
		<PanelTitle>
			{launch && <LaunchSpace />}
			{title}
			{!plain && <Caret w={8} />}
			{launch && <Launcher width="7" height="7" stroke={ink} fill="none"><path d="M1 1 L5 5 M6 2 V6 H2" /></Launcher>}
		</PanelTitle>
	</PanelBox>
);

const BigButton = styled.button`
	flex: ${(p) => (p.$w ? 'none' : 1)};
	width: ${(p) => p.$w}px;
	height: 70px;
	display: flex;
	flex-direction: column;
	align-items: center;
	font-size: 12px;
	line-height: 16px;

	> svg:first-child { margin: 2px 0 4px; overflow: visible; }
	> svg:last-child { margin-top: 1px; }
`;

const TextArrow = styled.span`
	display: flex;
	align-items: center;
	gap: 14px;
	padding-left: 18px;
`;

const Rows = styled.div`
	display: grid;
	flex: ${(p) => (p.$grow ? 1 : 'none')};
	grid-auto-rows: 22px;
	row-gap: 2px;
	align-content: start;
	justify-items: start;
	margin-left: ${(p) => p.$ml || 0}px;
`;

const Line = styled.div`
	display: flex;
	gap: 4px;
	width: 100%;
`;

const Cluster = styled.div`
	display: flex;
	height: 22px;
	border: 1px solid #b9cdca;
	background: linear-gradient(#fff 0 7px, #f7f7f7 7px 14px, #fff 14px);

	> button { height: 20px; }
	> button + button { border-left: 1px solid #b9cdca; }
`;

const Group = ({ icons, w = 20, arrow }) => (
	<Cluster>
		{icons.map((n) => <Tool key={n} $w={w} aria-label={n}><Icon name={n} /></Tool>)}
		{arrow && <Tool $w={10} aria-label="More"><Caret w={5} /></Tool>}
	</Cluster>
);

const LabelButton = styled.button`
	display: flex;
	align-items: center;
	height: 22px;
	gap: ${(p) => p.$gap || 3}px;
	font-size: 12px;
	white-space: nowrap;

	> svg:last-child:not(:first-child) { margin-left: 3px; }
`;

const SelectBox = styled.label`
	display: flex;
	align-items: center;
	gap: ${(p) => p.$gap || 2}px;
	flex: ${(p) => (p.$w ? 'none' : 1)};
	width: ${(p) => (p.$w ? `${p.$w}px` : 'auto')};
	height: 22px;
	padding: 0 3px 0 1px;
	border: 1px solid ${(p) => (p.$dark ? '#5a5056' : '#b9cdca')};
	background: ${(p) => (p.$dark
		? 'linear-gradient(#fff 0 3px, #f7f7f7 3px 10px, #e8e6e2 10px 15px, #d8cfca 15px)'
		: 'linear-gradient(#fff 0 7px, #f7f7f7 7px)')};

	select {
		flex: 1;
		min-width: 0;
		height: 18px;
		appearance: none;
		outline: 0;
		font-size: 12px;
		line-height: 18px;
	}
`;

const Swatch = styled.span`
	flex: none;
	width: ${(p) => p.$s || 16}px;
	height: ${(p) => p.$s || 16}px;
	border: 1px solid #111;
	background: #fff;
`;

const Stroke = styled.span`
	flex: none;
	width: 64px;
	height: 2px;
	background: ${(p) => p.$c};
`;

const Picker = ({ label, value, children, ...rest }) => (
	<SelectBox {...rest}>
		{children}
		<select aria-label={label}><option>{value}</option></select>
		<Caret w={8} color={rest.$dark ? '#111' : ink} />
	</SelectBox>
);

const Ribbon = () => (
	<RibbonBar>
		<Panel title="Draw" w={111}>
			<BigButton>
				<svg width="32" height="32" viewBox="0 0 32 32" fill="#fff" stroke={ink}>
					<path d="M2 30 L30 2" strokeWidth="1.4" /><path d="M.5 27.5 H4.5 V31.5 H.5Z M27.5 1 H31.5 V5 H27.5Z" />
				</svg>
				Line
			</BigButton>
			<Rows>
				<Line><Group icons={['arc']} arrow /><Group icons={['polyline']} /></Line>
				<Line><Group icons={['circle']} arrow /><Group icons={['rect']} /></Line>
				<Line><Group icons={['ellipse']} arrow /><Group icons={['hatch']} /></Line>
			</Rows>
		</Panel>
		<Panel title="Modify" w={158}>
			<BigButton><Icon name="move" size={32} />Move</BigButton>
			<Rows>
				<Line><Group icons={['copy', 'rotate', 'stretch']} w={23} /><Group icons={['order']} arrow /></Line>
				<Line><Group icons={['scale', 'offset', 'mirror']} w={23} /><Group icons={['trim']} arrow /></Line>
				<Line><Group icons={['erase', 'explode', 'array']} w={23} /><Group icons={['fillet']} arrow /></Line>
			</Rows>
		</Panel>
		<Panel title="Layers" w={206} pad="4px 2px 0 2px">
			<Rows $grow>
				<Line>
					<Group icons={['layerProps']} />
					<Group icons={['layerCur']} />
					<Group icons={['layerMatch', 'layerPrev']} w={23} />
					<Group icons={['layerIso', 'layerUniso']} w={23} />
					<Group icons={['layerFreeze', 'layerOff']} w={22} />
				</Line>
				<Line><Picker label="Layer state" value="Unsaved Layer State" /></Line>
				<Line>
					<Picker $gap={4} label="Layer" value="0">
						<Icon name="bulb" /><Icon name="sun" /><Icon name="unlock" /><Swatch $s={14} />
					</Picker>
				</Line>
			</Rows>
		</Panel>
		<Panel title="Annotation" w={170}>
			<BigButton $w={74}>
				<svg width="32" height="32" viewBox="0 0 32 32">
					<text x="16" y="30" textAnchor="middle" fontFamily="Open Sans" fontSize="38" fontWeight="600" fill={ink}>A</text>
				</svg>
				Multiline
				<TextArrow>Text<Caret w={5} /></TextArrow>
			</BigButton>
			<Rows>
				<LabelButton $gap={2}><Icon name="linear" />Linear <Caret w={5} /></LabelButton>
				<LabelButton $gap={2}><Icon name="mleader" />Multileader <Caret w={5} /></LabelButton>
				<LabelButton $gap={5}><Icon name="table" />Table</LabelButton>
			</Rows>
		</Panel>
		<Panel title="Block" w={164}>
			<BigButton $w={51}>
				<svg width="32" height="32" viewBox="0 0 32 32" fill="#fff" stroke={ink} strokeWidth="1.3">
					<path d="M13 12 V2 H24 L30 8 V25 H13" /><path d="M24 2 V8 H30" fill={mint} />
					<path d="M2 23 V11 H21 V23Z" /><circle cx="21" cy="23" r="7" fill={mint} fillOpacity=".8" /><path d="M14 23 H21 V16" fill="none" /><path d="M.5 21.5 H3.5 V24.5 H.5Z" />
				</svg>
				Insert
			</BigButton>
			<Rows $ml={2}>
				<LabelButton $gap={4}><Icon name="makeBlock" />Create</LabelButton>
				<LabelButton $gap={4}><Icon name="editBlock" />Edit</LabelButton>
				<LabelButton $gap={1}><Icon name="editAttr" />Edit Attributes <Caret w={5} /></LabelButton>
			</Rows>
		</Panel>
		<Panel title="Properties" w={205} launch pad="4px 1px 0 4px">
			<Rows $grow>
				<Line><LabelButton aria-label="Color"><Icon name="wheelCol" /></LabelButton><Picker label="Object color" value="ByLayer"><Swatch /></Picker></Line>
				<Line><LabelButton aria-label="Lineweight"><Icon name="weights" /></LabelButton><Picker label="Lineweight value" value="ByLayer"><Stroke $c="#000" /></Picker></Line>
				<Line><LabelButton aria-label="Linetype"><Icon name="ltypes" /></LabelButton><Picker label="Linetype value" value="ByLayer"><Stroke $c="#857b79" /></Picker></Line>
			</Rows>
		</Panel>
		<Panel title="Utilities" w={95}>
			<BigButton>
				<svg width="32" height="32" viewBox="0 0 32 32" fill="none" stroke={ink}>
					<path d="M1.5 8 V17 M30.5 8 V17 M2 12.5 H30 M6 10 L2 12.5 L6 15 M26 10 L30 12.5 L26 15" strokeWidth="1.3" />
					<rect x="1.5" y="19.5" width="29" height="6" fill="#f8c838" stroke="#a8601c" /><path d="M5 20 V22 M9 20 V22 M13 20 V22 M17 20 V22 M21 20 V22 M25 20 V22" stroke="#a8601c" />
				</svg>
				Measure
				<Caret w={5} />
			</BigButton>
			<Rows>
				<Group icons={['selCycle']} /><Group icons={['selSimilar']} /><Group icons={['calc']} />
			</Rows>
		</Panel>
		<Panel title="Clipboard" w={78} plain>
			<BigButton>
				<svg width="32" height="32" viewBox="0 0 32 32" fill="#fff" stroke={ink}>
					<rect x="3" y="3" width="22" height="26" rx="2" fill="#a89a98" /><path d="M8 5 V2 H11 Q14 -1 17 2 H20 V5Z" />
					<path d="M10.5 11 H22 L27.5 16.5 V31.5 H10.5Z" /><path d="M12 14 H22 V18 H26 V21 H12Z" fill={mint} stroke="none" /><path d="M22 11 V16.5 H27.5" />
				</svg>
				Paste
				<Caret w={5} />
			</BigButton>
			<Rows>
				<Group icons={['cut']} /><Group icons={['copyClip']} /><Group icons={['matchProp']} />
			</Rows>
		</Panel>
		<RibbonRest />
	</RibbonBar>
);

/* ---------- docked toolbars ---------- */

const Strip = styled.div`
	display: flex;
	align-items: flex-start;
	padding: 5px 0;
`;

const HBar = styled.div`
	display: flex;
	align-items: center;
	height: 24px;
	border: 1px solid #3c2e32;
	background: #f7f7f7;
`;

const dots = 'conic-gradient(from 270deg at 1px 1px, #17120f 90deg, transparent 0) 0 0 / 2px 2px content-box';

const HGrip = styled.i`
	align-self: stretch;
	width: 8px;
	padding: 4px 2px;
	background: ${dots}, #5d534d;
`;

const Rule = styled.i`
	flex: none;
	width: ${(p) => (p.$h ? '19px' : '1px')};
	height: ${(p) => (p.$h ? '1px' : '18px')};
	margin: ${(p) => (p.$h ? '3px 2px 2px' : '0 2px')};
	background: #8e8e92;
`;

const VBar = styled.div`
	flex: none;
	align-self: flex-start;
	width: 25px;
	border: 1px solid #3c2e32;
	border-top: 0;
	background: #f7f7f7;

	&::before {
		content: '';
		display: block;
		height: 8px;
		padding: 2px 4px;
		background: ${dots}, #5d534d;
	}
`;

const ToolStrip = () => (
	<Strip>
		<HBar>
			<HGrip />
			<Tool aria-label="Layer properties"><Icon name="layerProps" /></Tool>
			<Picker $w={299} $dark $gap={3} label="Current layer" value="0">
				<Icon name="bulb" /><Icon name="sun" size={14} /><Icon name="vpFreeze" size={14} /><Icon name="unlock" size={14} /><Swatch $s={11} />
			</Picker>
			<Tool aria-label="Make current"><Icon name="layerCur" /></Tool>
			<Tool aria-label="Layer previous"><Icon name="layerPrev" /></Tool>
		</HBar>
		<HBar>
			<HGrip />
			{['pan', 'zoomPrev', 'zoomWin', 'zoomDyn', 'zoomScale', 'zoomCenter', 'zoomObj'].map((n) => <Tool key={n} aria-label={n}><Icon name={n} /></Tool>)}
			<Rule />
			<Tool aria-label="Zoom in"><Icon name="zoomIn" /></Tool>
			<Tool aria-label="Zoom out"><Icon name="zoomOut" /></Tool>
			<Rule />
			<Tool aria-label="Zoom all"><Icon name="zoomAll" /></Tool>
			<Tool aria-label="Zoom extents"><Icon name="zoomExt" /></Tool>
		</HBar>
	</Strip>
);

const SideBar = ({ icons }) => (
	<VBar>
		{icons.map((n, i) => (n === '-'
			? <Rule as="div" $h key={i} />
			: <Tool key={n} $w={22} aria-label={n}><Icon name={n} /></Tool>))}
	</VBar>
);

/* ---------- product palette ---------- */

const Work = styled.main`
	flex: 1;
	min-height: 0;
	display: grid;
	grid-template-columns: 168px 1fr;
	column-gap: 4px;
`;

const Palette = styled.aside`
	display: flex;
	flex-direction: column;
	gap: 7px;
	padding-bottom: 3px;
`;

const PaletteHead = styled.div`
	height: 22px;
	margin-top: 1px;
	border-radius: 4px 4px 0 0;
	border-bottom: 2px solid #f7f7f7;
	background: #a09fa4;
	padding: 3px;

	i {
		display: block;
		width: 4px;
		height: 12px;
		background: ${dots};
	}
`;

const PaletteBox = styled.div`
	flex: 1;
	display: flex;
	flex-direction: column;
	margin: 0 1px;
	padding: 2px 5px 7px 4px;
	border: 1px solid #2e2629;
	outline: 1px solid #fff;
	border-radius: 2px;
	background: #fff;
`;

const Between = styled.div`
	display: flex;
	justify-content: space-between;
	align-items: flex-start;
`;

const MiniButton = styled.button`
	width: 19px;
	height: 16px;
	margin-right: -3px;
	border: 1px solid #8fb2d2;
	border-radius: 3px;
	background: linear-gradient(#cfe0f2, #9dbcdc);
	display: flex;
	align-items: center;
	justify-content: center;
`;

const Brand = styled.h2`
	margin: 7px 0 0;
	font: 700 14px/18px "Open Sans", sans-serif;
	color: #6e6264;

	b { color: #3f7aa0; }
`;

const PaletteTabs = styled.div`
	display: flex;
	align-items: flex-end;
	height: 22px;

	button {
		width: 40px;
		height: 19px;
		padding: 1px 0 0 4px;
		border: 1px solid #8e8683;
		border-left: 0;
		background: linear-gradient(#f7f7f7 0 8px, ${mint} 8px 13px, #d9d4d0 13px);
	}
	button:first-child {
		width: 46px;
		height: 22px;
		padding-left: 8px;
		border-left: 1px solid #8e8683;
		border-bottom: 0;
		background: #fff;
	}
`;

const PaletteBody = styled.div`
	flex: 1;
	padding: 6px 16px 0 7px;
	border: 1px solid #8e8683;
	border-top: 0;
	background: linear-gradient(#8e8683, #8e8683) 45px 0 / 100% 1px no-repeat;
	color: #4a84a0;

	p { margin: 0 0 11px; }
	li {
		height: 24px;
		margin: 0 0 8px 8px;
		border-image: linear-gradient(90deg, #f0f0f0 28%, ${mint} 28% 49%, #a8c8d8 49% 51%, ${mint} 51% 72%, #f0f0f0 72%) 1;
		border-style: solid;
		border-width: 1px 0;
	}
	a {
		display: block;
		padding-left: 8px;
		font: 700 11px/22px "Open Sans", sans-serif;
		color: inherit;
		text-decoration: none;
		white-space: nowrap;
	}
`;

const ProductPalette = () => (
	<Palette>
		<PaletteHead><i /></PaletteHead>
		<PaletteBox>
			<Between>
				<svg width="82" height="32" overflow="visible" role="img" aria-label="PAM Saint-Gobain">
					<g fill="#aaa29e" fontFamily="DejaVu Sans" fontWeight="700">
						<text x="-2" y="22" fontSize="29">PA</text><text x="42" y="22" fontSize="37">m</text>
					</g>
					<path d="M44 15 q3 -4 6 0 t6 0 M44 19 q3 -4 6 0 t6 0 M64 15 q3 -4 6 0 t6 0 M64 19 q3 -4 6 0 t6 0" fill="none" stroke="#fff" strokeWidth="3" />
					<path d="M44 15 q3 -4 6 0 t6 0 M44 19 q3 -4 6 0 t6 0 M64 15 q3 -4 6 0 t6 0 M64 19 q3 -4 6 0 t6 0" fill="none" stroke="#4a9ad0" strokeWidth="1.4" />
					<text x="81" y="28" textAnchor="end" fontFamily="Liberation Sans" fontSize="5" fill="#77706e">SAINT-GOBAIN</text>
					<path d="M0 30.5 H81" stroke="#c8c1bd" />
				</svg>
				<MiniButton aria-label="Collapse"><svg width="12" height="5"><rect x=".5" y=".5" width="11" height="4" fill="#fff" stroke="#555" /></svg></MiniButton>
			</Between>
			<Between>
				<Tool $w={16} $h={25} aria-label="About"><Icon name="info" /></Tool>
				<Brand><b>Dúctil</b>CAD</Brand>
			</Between>
			<PaletteTabs>
				<button aria-label="Products"><Icon name="list" /></button>
				<button aria-label="Tools"><Icon name="tools" /></button>
				<button aria-label="Settings"><Icon name="cog" /></button>
			</PaletteTabs>
			<PaletteBody>
				<p>Produtos:</p>
				<ul>
					{['Sistema Blutop', 'Linha Adução Água', 'Válvulas', 'Acessórios', 'Tampões', 'Grelhas', 'Linha Klikso'].map((t) => (
						<li key={t}><a href="#produtos">{t}</a></li>
					))}
				</ul>
			</PaletteBody>
		</PaletteBox>
	</Palette>
);

/* ---------- drawing window ---------- */

const Right = styled.div`
	display: flex;
	flex-direction: column;
	gap: 5px;
	min-width: 0;
`;

const Docked = styled.div`
	flex: 1;
	min-height: 0;
	display: flex;
	gap: 3px;
	padding-right: 3px;
`;

const DrawingFrame = styled.section`
	flex: 1;
	min-width: 0;
	display: grid;
	grid-template: 1fr 16px / 1fr 18px;
	margin: 0 1px 0 2px;
	border: 1px solid #a59ea2;
	border-bottom-color: #fff;
`;

const Canvas = styled.div`
	position: relative;
	background: #000;
`;

const DocButtons = styled.div`
	display: flex;
	justify-content: flex-end;
	gap: 8px;
	padding: 8px 10px;

	button { width: 12px; height: 12px; }
`;

const Crosshair = styled.svg`
	position: absolute;
	left: 273px;
	top: 275px;
`;

const Ucs = styled.svg`
	position: absolute;
	left: 11px;
	bottom: 0;
`;

const Scroll = styled.div`
	display: flex;
	flex-direction: ${(p) => (p.$v ? 'column' : 'row')};
	align-items: center;
	justify-content: space-between;
	padding: ${(p) => (p.$v ? '5px 0' : '0 5px')};
	background: #f7f7f7;
	border: 0 solid ${mint};
	border-width: ${(p) => (p.$v ? '0 1px 0 2px' : '1px 0 0')};
`;

const Thumb = styled.i`
	width: 15px;
	height: 14px;
	border: 1px solid #8e8e92;
	border-radius: 2px;
	background: linear-gradient(90deg, #fff, #f0f0ee 45%, #cbd3d3);
	margin: ${(p) => p.$m || 0};
`;

const Sheet = styled.div`
	display: flex;
	grid-column: 1 / 3;
	background: #f7f7f7;
	border-top: 1px solid #8e8e92;
	font: 11px/15px "Liberation Sans", sans-serif;
	color: #111;

	> div:last-child {
		width: 400px;
		margin-left: auto;
		margin-right: 12px;
		padding-left: 10px;
		border-left: 1px solid #b9cdca;
	}
`;

const NavButton = styled.button`
	width: 15px;
	display: flex;
	align-items: center;
	justify-content: center;
	border-right: 1px solid #a59ea2;
`;

const SheetTab = styled.button`
	height: 15px;
	padding: ${(p) => (p.$on ? '0 12px' : '0 5px 0 4px')};
	font-size: 11px;
	line-height: 16px;
	${(p) => p.$on && css`
		color: #fff;
		background: #000;
		clip-path: polygon(0 0, 100% 0, calc(100% - 6px) 100%, 6px 100%);
	`}
`;

const Slash = () => <svg width="7" height="15" stroke="#555" fill="none"><path d="M6 0 L1 15" /></svg>;

const Drawing = () => (
	<DrawingFrame>
		<Canvas>
			<DocButtons>
				<button aria-label="Minimize drawing"><svg width="12" height="12"><path d="M1 10 H11" stroke="#f2f4e6" strokeWidth="2.5" /></svg></button>
				<button aria-label="Restore drawing"><svg width="12" height="12" fill="none" stroke="#f2f4e6" strokeWidth="1.5"><path d="M4 3 V1 H11 V8 H9" /><rect x="1.5" y="4" width="6.5" height="7" strokeWidth="2" /></svg></button>
				<button aria-label="Close drawing"><svg width="12" height="12"><path d="M2 2 L10 10 M10 2 L2 10" stroke="#f2f4e6" strokeWidth="2.6" /></svg></button>
			</DocButtons>
			<Crosshair width="72" height="72" fill="none" stroke="#fff" shapeRendering="crispEdges">
				<path d="M36.5 0 V72 M0 35.5 H72" /><rect x="33.5" y="32.5" width="6" height="6" />
			</Crosshair>
			<Ucs width="104" height="112" overflow="visible" fill="none" stroke="#fff">
				<path d="M6.5 87 V37 M12 93.5 H62" /><rect x=".5" y="87.5" width="11" height="12" />
				<path d="M6.5 24 L1.5 37.5 H11.5Z M6.5 24 L5 37 M6.5 24 L8 37 M76 93.5 L62 88.5 V98.5Z M76 93.5 L62 92 M76 93.5 L62 95" strokeWidth=".8" />
				<g fill="#fff" stroke="none" fontFamily="Open Sans" fontWeight="300" fontSize="18">
					<text x="3" y="14">Y</text>
					<text x="87" y="100">X</text>
				</g>
			</Ucs>
		</Canvas>
		<Scroll $v>
			<Caret dir="up" w={7} />
			<Thumb />
			<Caret w={7} />
		</Scroll>
		<Sheet>
			<NavButton aria-label="First layout"><svg width="9" height="9" fill="#74656c"><path d="M0 0 H1.5 V9 H0Z M8 0 V9 L3 4.5Z" /></svg></NavButton>
			<NavButton aria-label="Previous layout"><svg width="9" height="9" fill="#74656c"><path d="M7 0 V9 L2 4.5Z" /></svg></NavButton>
			<NavButton aria-label="Next layout"><svg width="9" height="9" fill="#74656c"><path d="M2 0 V9 L7 4.5Z" /></svg></NavButton>
			<NavButton aria-label="Last layout"><svg width="9" height="9" fill="#74656c"><path d="M1 0 V9 L6 4.5Z M7.5 0 H9 V9 H7.5Z" /></svg></NavButton>
			<SheetTab $on>Model</SheetTab>
			<SheetTab>Layout1</SheetTab><Slash />
			<SheetTab>Layout2</SheetTab><Slash />
			<Scroll>
				<Caret dir="left" w={7} />
				<Thumb $m="0 0 0 auto" />
				<Tool $w={18} $h={14} aria-label="Scroll right"><Caret dir="right" w={7} /></Tool>
			</Scroll>
		</Sheet>
	</DrawingFrame>
);

/* ---------- command line ---------- */

const CommandBox = styled.section`
	display: grid;
	grid-template: 42px 19px / 17px 1fr 15px;
	background: #fff;
	color: #111;
	font: 13px/16px "Liberation Mono", monospace;

	pre { margin: 0; padding-top: 1px; font: inherit; }
	input { width: calc(100% - 66px); }
	label { display: flex; padding-top: 2px; }
`;

const CommandGrip = styled.i`
	grid-row: 1 / 3;
	border-radius: 4px 0 0 0;
	padding: 3px 2px;
	background: #a09fa4;

	&::after {
		content: '';
		display: block;
		width: 12px;
		height: 4px;
		background: ${dots};
	}
`;

const PromptRow = styled.div`
	grid-column: 2 / 4;
	display: flex;
	border-top: 1px solid #a09fa4;

	label { flex: 1; }
	> div { width: 70px; margin-right: 18px; padding-left: 10px; }
`;

const CommandLine = () => (
	<CommandBox>
		<CommandGrip />
		<pre>{'Command:\nCommand:'}</pre>
		<Scroll $v><Caret dir="up" w={6} /><Caret w={6} /></Scroll>
		<PromptRow>
			<label>Command:<input type="text" aria-label="Command" /></label>
			<Scroll><Caret dir="left" w={6} /><Thumb $m="0 12px 0 0" /><Caret dir="right" w={6} /></Scroll>
		</PromptRow>
	</CommandBox>
);

/* ---------- status bar ---------- */

const Status = styled.footer`
	display: flex;
	height: 22px;
	padding-left: 4px;
	border-top: 1px solid #111;
	background: linear-gradient(#948a83 0 11px, #7d7d7a 11px 18px, #837974 18px);
	font: 11px/20px "Liberation Sans", sans-serif;
	color: #111;
`;

const StatusGroup = styled.div`
	display: flex;
	margin-left: ${(p) => p.$ml || 0};
`;

const StatusButton = styled.button`
	display: flex;
	align-items: center;
	justify-content: center;
	gap: 2px;
	min-width: ${(p) => p.$w || 22}px;
	white-space: nowrap;
	border-right: 1px solid #62595a;
	background: ${(p) => (p.$on
		? 'linear-gradient(#cfe8f4, #9ccbe8)'
		: 'linear-gradient(#c1c1c1 0 9px, #a9a9b6 9px 13px, #a5a4a6 13px)')};
`;

const StatusBar = () => (
	<Status>
		<StatusGroup>
			{['gridDots', 'grid', 'ortho', 'polar', 'osnap', 'otrack', 'ducs', 'dyn', 'qp'].map((n) => (
				<StatusButton key={n} $on={n === 'otrack'} aria-label={n}><Icon name={n} /></StatusButton>
			))}
		</StatusGroup>
		<StatusGroup $ml="auto">
			<StatusButton $w={44}>MODEL</StatusButton>
			<StatusButton aria-label="Quick view layouts"><Icon name="layoutBtn" /></StatusButton>
			<StatusButton aria-label="Quick view drawings"><Icon name="views" /></StatusButton>
		</StatusGroup>
		<StatusGroup $ml="12px">
			{['panMove', 'zoomPlain', 'steer', 'motion'].map((n) => <StatusButton key={n} aria-label={n}><Icon name={n} /></StatusButton>)}
		</StatusGroup>
		<StatusGroup $ml="12px">
			<StatusButton aria-label="Annotation visibility"><Icon name="annoVis" /></StatusButton>
			<StatusButton aria-label="Annotation scale"><Icon name="annoAuto" /></StatusButton>
		</StatusGroup>
		<StatusGroup $ml="6px">
			<StatusButton $w={152}><Icon name="gear" />2D Drafting &amp; Annotation<Caret w={8} color="#111" /></StatusButton>
			<StatusButton aria-label="Toolbar lock"><Icon name="lock" /></StatusButton>
		</StatusGroup>
		<StatusGroup $ml="3px">
			<StatusButton $w={12} aria-label="Status menu"><Caret w={6} color="#111" /></StatusButton>
			<StatusButton aria-label="Clean screen"><Icon name="clean" size={14} /></StatusButton>
		</StatusGroup>
	</Status>
);

/* ---------- taskbar ---------- */

const TaskbarBox = styled.nav`
	position: relative;
	display: flex;
	align-items: center;
	height: 30px;
	padding-left: 59px;
	border-top: 1px solid #222;
	box-shadow: inset 0 1px #a9d2dc;
	background: linear-gradient(62deg, #7b95a7 0 30px, #8e98a4 31px 205px, #7b95a7 206px 300px, #9492a4 301px 318px, #93a6a3 319px 330px, #7b95a7 331px 365px, #9492a4 366px 400px, #7b95a7 401px 640px, #93a6a3 641px 762px, #9492a4 763px 766px, #7b95a7 767px 826px, #9492a4 827px 833px, #93a6a3 834px 896px, #7b95a7 897px 1064px, #9492a4 1065px 1076px, #93a6a3 1077px 1222px, #9492a4 1223px 1229px, #7b95a7 1230px);
`;

const Orb = styled.button`
	position: absolute;
	left: 9px;
	bottom: -2px;
	width: 36px;
	height: 36px;
`;

const Task = styled.button`
	display: flex;
	align-items: center;
	gap: 5px;
	width: 160px;
	height: 28px;
	padding-left: 8px;
	border: 1px solid #3d4b58;
	border-radius: 2px;
	box-shadow: inset 0 0 0 1px #c6d4d4;
	font: 12px/16px ${ui};
	color: #fff;
	white-space: nowrap;
	overflow: hidden;
	background: ${(p) => (p.$on
		? 'linear-gradient(170deg, #dfe6d0 0 30%, #bccde4 31% 50%, #b9b2bb 51% 75%, #b9cdca 76%)'
		: 'linear-gradient(170deg, #b9cdca 0 20%, #aaa7bf 21% 48%, #93a6a3 50%)')};
`;

const Pinned = styled.div`
	display: flex;
	padding: 0 1px;
`;

const Tray = styled.div`
	display: flex;
	align-items: center;
	margin-left: auto;
	height: 100%;
	color: #fff;
	font-size: 12px;

	time { padding: 0 26px 0 28px; }
`;

const ShowDesktop = styled.button`
	width: 15px;
	height: 28px;
	border: 1px solid #c0d0d8;
	background: linear-gradient(#93a8b4, #6b8496 60%, #a9bcc4);
`;

const Taskbar = () => (
	<TaskbarBox>
		<Orb aria-label="Start">
			<svg width="36" height="36" viewBox="0 0 36 36">
				<defs>
					<radialGradient id="orb" cx=".5" cy="1" r=".9">
						<stop offset="0" stopColor="#35c8e8" /><stop offset=".5" stopColor="#1a5a88" /><stop offset="1" stopColor="#4b6a84" />
					</radialGradient>
				</defs>
				<circle cx="18" cy="18" r="17" fill="url(#orb)" stroke="#23405a" />
				<path d="M4 13 A15 15 0 0 1 32 13 Q18 20 4 13Z" fill="#b8ccd8" opacity=".6" />
				<path d="M9 11 Q13 8 17 10.5 L16 17.5 Q12 15 8 17.5Z" fill="#e8642c" />
				<path d="M18.5 11 Q23 13.5 28 11 L27 18 Q22 20 17.5 18Z" fill="#8cc63c" />
				<path d="M7.7 19 Q12 16.5 15.8 19 L14.8 26 Q11 23.5 7 26Z" fill="#3c9ae0" />
				<path d="M17.3 19.5 Q22 22 26.7 19.5 L25.5 26.5 Q20 28.5 16.3 26.5Z" fill="#f8c83c" />
			</svg>
		</Orb>
		<Task><Icon name="firefox" />Rádio Ao Vivo - Mozi...</Task>
		<Pinned>
			{['photos', 'swirl', 'player', 'calcBlue', 'flagBlue'].map((n) => <Tool key={n} $w={46} aria-label={n}><Icon name={n} /></Tool>)}
		</Pinned>
		<Task $on><Icon name="cadDoc" />AutoCAD 2010 - [Dra...</Task>
		<Task><Icon name="vlisp" />Visual LISP for AutoC...</Task>
		<Tray>
			<Tool $w={24} aria-label="Hidden icons"><Caret dir="up" w={8} color="#fff" /></Tool>
			{['trayGreen', 'avast', 'power', 'network', 'volume'].map((n) => <Tool key={n} $w={24} aria-label={n}><Icon name={n} /></Tool>)}
			<time>15:47</time>
			<ShowDesktop aria-label="Show desktop" />
		</Tray>
	</TaskbarBox>
);

const drawTools = ['line', 'xline', 'polyline', 'polygon', 'rect', 'arc', 'circle', 'cloud', 'spline', 'ellipse', 'ellArc', 'block', 'makeBlock', 'point', 'hatch', 'gradient', 'region', 'table', 'toolA'];
const modifyTools = ['erase', 'copy', 'mirror', 'offset', 'array', 'move', 'rotate', 'scale', 'stretch', 'trim', 'extend', 'breakPt', 'breakObj', 'join', 'chamfer', 'fillet', 'explode'];
const snapTools = ['snapTrack', 'snapFrom', '-', 'snapEnd', 'snapMid', 'snapInt', 'snapApp', 'snapExt', '-', 'snapCen', 'snapQua', 'snapTan', '-', 'snapPer', 'snapPar', 'snapIns', 'snapNode', '-', 'snapNear', 'snapNone', '-', 'snapSet'];

const App = () => (
	<Window>
		<GlobalStyle />
		<TitleBar />
		<Ribbon />
		<ToolStrip />
		<Work>
			<ProductPalette />
			<Right>
				<Docked>
					<SideBar icons={drawTools} />
					<SideBar icons={modifyTools} />
					<Drawing />
					<SideBar icons={snapTools} />
				</Docked>
				<CommandLine />
			</Right>
		</Work>
		<StatusBar />
		<Taskbar />
	</Window>
);

export default App;
